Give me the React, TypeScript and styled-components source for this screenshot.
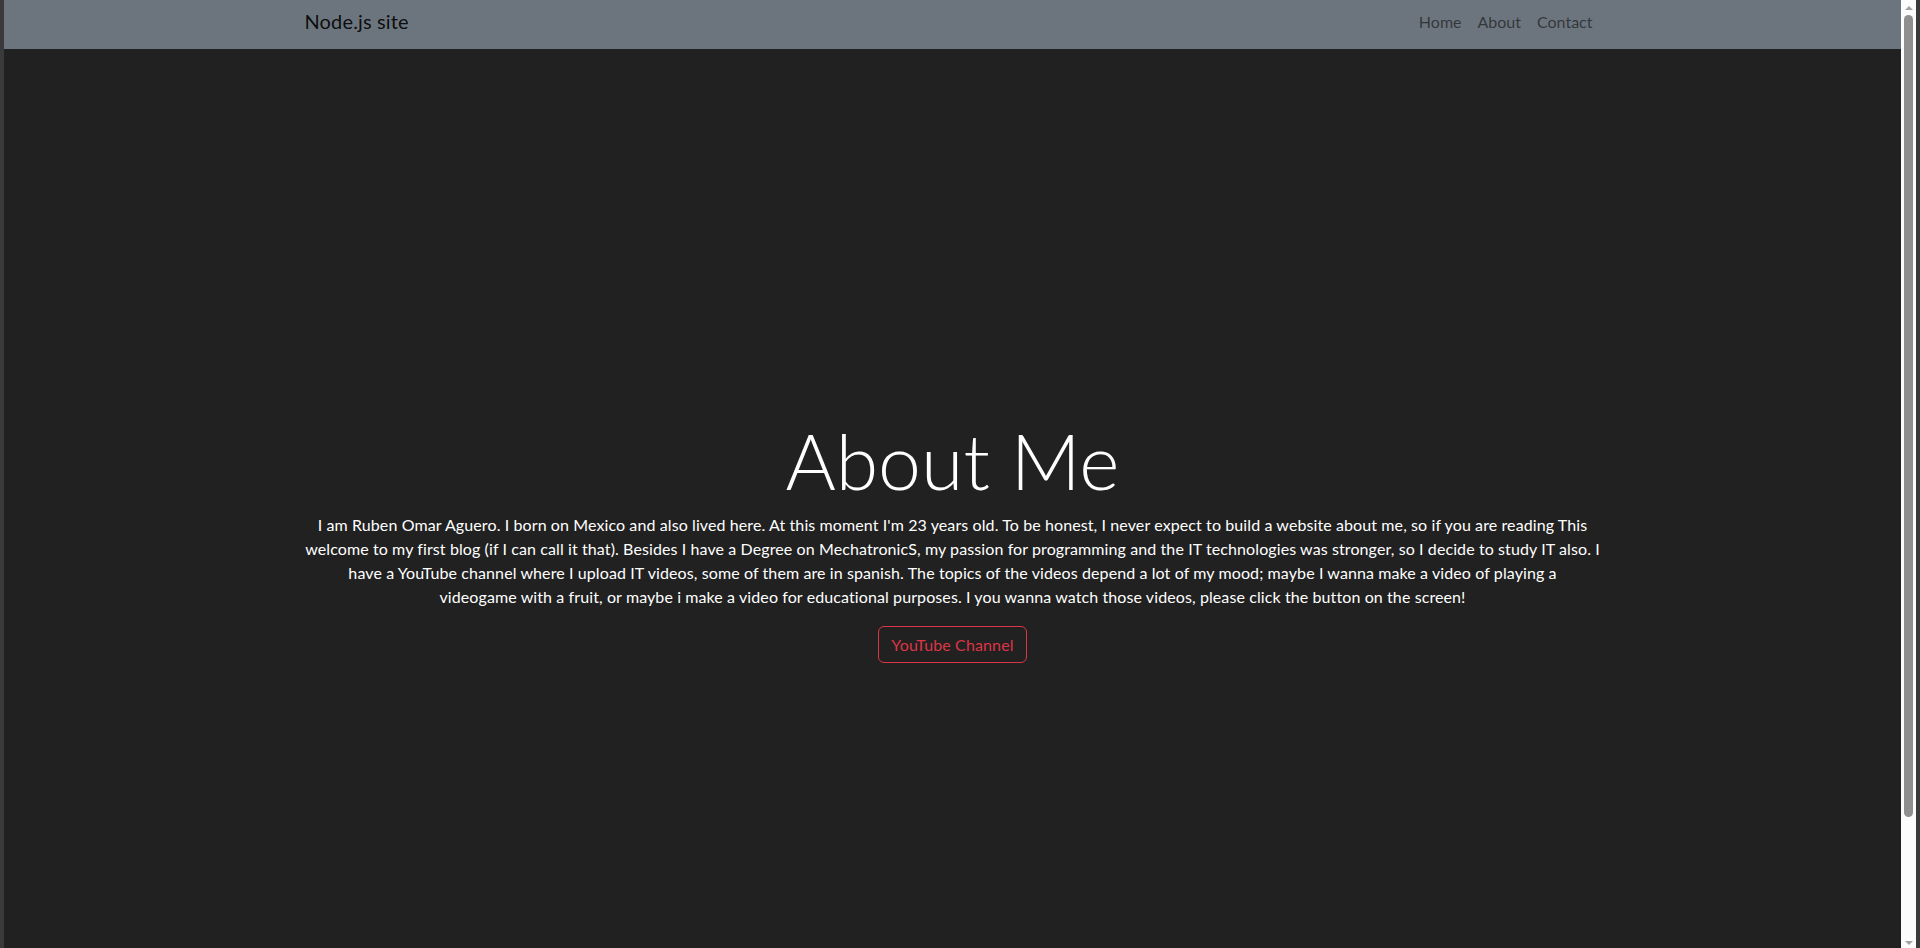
import React from "react";
import styled, { createGlobalStyle } from "styled-components";

const GlobalStyle = createGlobalStyle`
  html, body {
    margin: 0;
    padding: 0;
    height: 100%;
    overflow: hidden;
    background: #212121;
  }
  body {
    font-family: "Lato", "Noto Sans", sans-serif;
  }
  #root {
    height: 100%;
  }
`;

const Frame = styled.div`
  display: flex;
  height: 100vh;
  width: 100vw;
`;

const WindowEdge = styled.div`
  width: 4px;
  flex: none;
  background: #3a3a3a;
`;

const Page = styled.div`
  flex: 1;
  display: flex;
  flex-direction: column;
  background: #212121;
  min-width: 0;
`;

const Navbar = styled.nav`
  height: 49px;
  flex: none;
  background: #6c757d;
`;

const NavContainer = styled.div`
  width: 1296px;
  height: 100%;
  margin: 0 auto;
  box-sizing: border-box;
  padding-bottom: 7px;
  display: flex;
  align-items: center;
  justify-content: space-between;
`;

const Brand = styled.a`
  font-size: 20px;
  letter-spacing: 0.15px;
  color: rgba(0, 0, 0, 0.9);
  text-decoration: none;
`;

const NavList = styled.ul`
  display: flex;
  list-style: none;
  margin: 0;
  padding: 0;
`;

const NavLink = styled.a`
  display: block;
  padding: 0 8px;
  font-size: 16px;
  color: rgba(0, 0, 0, 0.55);
  text-decoration: none;
`;

const Main = styled.main`
  flex: 1;
  width: 1296px;
  margin: 0 auto;
  padding-top: 363px;
  display: flex;
  flex-direction: column;
  align-items: center;
  text-align: center;
  color: #ffffff;
`;

const Title = styled.h1`
  margin: 0;
  font-size: 77px;
  font-weight: 300;
  line-height: 96px;
`;

const Lead = styled.p`
  margin: 5px 0 0;
  font-size: 16px;
  line-height: 24px;
  letter-spacing: 0.1px;
`;

const OutlineButton = styled.a`
  margin-top: 17px;
  height: 37px;
  box-sizing: border-box;
  padding: 0 12px;
  display: inline-flex;
  align-items: center;
  border: 1px solid #dc3545;
  border-radius: 6px;
  color: #dc3545;
  font-size: 16px;
  letter-spacing: 0.13px;
  text-decoration: none;
`;

const Scrollbar = styled.div`
  width: 15px;
  flex: none;
  background: #fcfcfc;
  display: flex;
  flex-direction: column;
  align-items: center;
`;

const Arrow = styled.div<{ $down?: boolean }>`
  width: 0;
  height: 0;
  margin: ${(p) => (p.$down ? "auto 0 3px" : "6px 0 0")};
  border-left: 4px solid transparent;
  border-right: 4px solid transparent;
  ${(p) =>
    p.$down ? "border-top: 4px solid #a3a3a3;" : "border-bottom: 4px solid #a3a3a3;"}
`;

const Thumb = styled.div`
  width: 9px;
  height: 802px;
  margin-top: 5px;
  border-radius: 5px;
  background: #8f8f8f;
`;

export default function App() {
  return (
    <>
      <GlobalStyle />
      <Frame>
        <WindowEdge />
        <Page>
          <Navbar>
            <NavContainer>
              <Brand href="#">Node.js site</Brand>
              <NavList>
                <li><NavLink href="#">Home</NavLink></li>
                <li><NavLink href="#">About</NavLink></li>
                <li><NavLink href="#">Contact</NavLink></li>
              </NavList>
            </NavContainer>
          </Navbar>
          <Main>
            <Title>About Me</Title>
            <Lead>
              I am Ruben Omar Aguero. I born on Mexico and also lived here. At this moment I'm 23 years old. To be honest, I never expect to build a website about me, so if you are reading This
              <br />
              welcome to my first blog (if I can call it that). Besides I have a Degree on MechatronicS, my passion for programming and the IT technologies was stronger, so I decide to study IT also. I
              <br />
              have a YouTube channel where I upload IT videos, some of them are in spanish. The topics of the videos depend a lot of my mood; maybe I wanna make a video of playing a
              <br />
              videogame with a fruit, or maybe i make a video for educational purposes. I you wanna watch those videos, please click the button on the screen!
            </Lead>
            <OutlineButton href="#">YouTube Channel</OutlineButton>
          </Main>
        </Page>
        <Scrollbar>
          <Arrow />
          <Thumb />
          <Arrow $down />
        </Scrollbar>
        <WindowEdge />
      </Frame>
    </>
  );
}
